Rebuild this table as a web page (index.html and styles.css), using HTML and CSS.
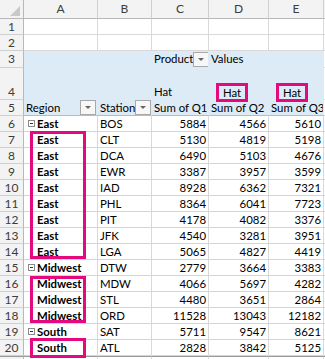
FILE: index.html
```html
<!DOCTYPE html>
<html>
<head>
<meta charset="UTF-8">
<title>Pivot table</title>
<link rel="stylesheet" href="styles.css">
</head>
<body>
<div class="wrap">
  <div class="sheet">
    <div class="corner"><svg width="10" height="10" viewBox="0 0 10 10"><polygon points="10,0 10,10 0,10" fill="#c9c9c9"/></svg></div>
    <div class="ch">A</div><div class="ch">B</div><div class="ch">C</div><div class="ch">D</div><div class="ch">E</div><div class="ch"></div>

    <div class="rh">1</div><div class="c"></div><div class="c"></div><div class="c"></div><div class="c"></div><div class="c"></div><div class="c"></div>
    <div class="rh">2</div><div class="c"></div><div class="c"></div><div class="c"></div><div class="c"></div><div class="c"></div><div class="c"></div>

    <div class="rh">3</div>
    <div class="c pv"></div><div class="c pv"></div>
    <div class="c pv"><span class="fld">Product</span><span class="dd"></span></div>
    <div class="c pv">Values</div><div class="c pv"></div><div class="c"></div>

    <div class="rh bot">4</div>
    <div class="c pv bot"></div><div class="c pv bot"></div>
    <div class="c pv bot">Hat</div>
    <div class="c pv bot open"><span class="mark">Hat</span></div>
    <div class="c pv bot open"><span class="mark">Hat</span></div>
    <div class="c"></div>

    <div class="rh">5</div>
    <div class="c pv last"><span class="fld">Region</span><span class="dd"></span></div>
    <div class="c pv last"><span class="fld">Station</span><span class="dd"></span></div>
    <div class="c pv last">Sum of Q1</div>
    <div class="c pv last">Sum of Q2</div>
    <div class="c pv last">Sum of Q3</div>
    <div class="c"></div>

    <div class="rh">6</div><div class="c r lbl"><span class="tog"></span>East</div><div class="c r">BOS</div><div class="c r num">5884</div><div class="c r num">4566</div><div class="c r num">5610</div><div class="c"></div>
    <div class="rh">7</div><div class="c r lbl ind">East</div><div class="c r">CLT</div><div class="c r num">5130</div><div class="c r num">4819</div><div class="c r num">5198</div><div class="c"></div>
    <div class="rh">8</div><div class="c r lbl ind">East</div><div class="c r">DCA</div><div class="c r num">6490</div><div class="c r num">5103</div><div class="c r num">4676</div><div class="c"></div>
    <div class="rh">9</div><div class="c r lbl ind">East</div><div class="c r">EWR</div><div class="c r num">3387</div><div class="c r num">3957</div><div class="c r num">3599</div><div class="c"></div>
    <div class="rh">10</div><div class="c r lbl ind">East</div><div class="c r">IAD</div><div class="c r num">8928</div><div class="c r num">6362</div><div class="c r num">7321</div><div class="c"></div>
    <div class="rh">11</div><div class="c r lbl ind">East</div><div class="c r">PHL</div><div class="c r num">8364</div><div class="c r num">6041</div><div class="c r num">7723</div><div class="c"></div>
    <div class="rh">12</div><div class="c r lbl ind">East</div><div class="c r">PIT</div><div class="c r num">4178</div><div class="c r num">4082</div><div class="c r num">3376</div><div class="c"></div>
    <div class="rh">13</div><div class="c r lbl ind">East</div><div class="c r">JFK</div><div class="c r num">4540</div><div class="c r num">3281</div><div class="c r num">3951</div><div class="c"></div>
    <div class="rh">14</div><div class="c r lbl ind">East</div><div class="c r">LGA</div><div class="c r num">5065</div><div class="c r num">4827</div><div class="c r num">4419</div><div class="c"></div>
    <div class="rh">15</div><div class="c r lbl"><span class="tog"></span>Midwest</div><div class="c r">DTW</div><div class="c r num">2779</div><div class="c r num">3664</div><div class="c r num">3383</div><div class="c"></div>
    <div class="rh">16</div><div class="c r lbl ind">Midwest</div><div class="c r">MDW</div><div class="c r num">4066</div><div class="c r num">5697</div><div class="c r num">4282</div><div class="c"></div>
    <div class="rh">17</div><div class="c r lbl ind">Midwest</div><div class="c r">STL</div><div class="c r num">4480</div><div class="c r num">3651</div><div class="c r num">2864</div><div class="c"></div>
    <div class="rh">18</div><div class="c r lbl ind">Midwest</div><div class="c r">ORD</div><div class="c r num">11528</div><div class="c r num">13043</div><div class="c r num">12182</div><div class="c"></div>
    <div class="rh">19</div><div class="c r lbl"><span class="tog"></span>South</div><div class="c r">SAT</div><div class="c r num">5711</div><div class="c r num">9547</div><div class="c r num">8621</div><div class="c"></div>
    <div class="rh">20</div><div class="c r lbl ind">South</div><div class="c r">ATL</div><div class="c r num">2828</div><div class="c r num">3842</div><div class="c r num">5125</div><div class="c"></div>
    <div class="rh edge"></div><div class="c edge"></div><div class="c edge"></div><div class="c edge"></div><div class="c edge"></div><div class="c edge"></div><div class="c edge"></div>
  </div>

  <!-- highlight boxes drawn over column A -->
  <div class="hl hl-east"></div>
  <div class="hl hl-midwest"></div>
  <div class="hl hl-south"></div>
</div>
</body>
</html>
```

FILE: styles.css
```css
body {
    margin: 0;
    padding: 0;
    background: #fff;
    overflow: hidden;
    font-family: Lato, "Liberation Sans", Arial, sans-serif;
    font-size: 11.4px;
    line-height: 14px;
    color: #000;
}

.wrap {
    position: relative;
    width: 325px;
    height: 359px;
    overflow: hidden;
}

.sheet {
    display: grid;
    grid-template-columns: 24px 74px 54px 57px 60px 55px 20px;
    grid-template-rows: 19px 16px 16px 17px 32px 16px repeat(15, 16px) 16px;
}

.sheet > div {
    box-sizing: border-box;
    border-right: 1px solid #d9d9d9;
    border-bottom: 1px solid #d9d9d9;
    display: flex;
    align-items: center;
    white-space: nowrap;
    overflow: hidden;
}

.corner {
    background: #f3f3f3;
    justify-content: flex-end;
    align-items: flex-end !important;
    padding: 0 3px 2px 0;
    border-right-color: #b8b8b8 !important;
    border-bottom-color: #b8b8b8 !important;
}

.ch {
    background: #f3f3f3;
    justify-content: center;
    color: #3c3c3c;
    font-size: 12px;
    border-right-color: #d0d0d0 !important;
    border-bottom-color: #b8b8b8 !important;
}

.rh {
    background: #f3f3f3;
    justify-content: center;
    color: #3c3c3c;
    font-size: 12px;
    border-right-color: #b8b8b8 !important;
    border-bottom-color: #d0d0d0 !important;
}

.c {
    padding: 0 2px;
}

/* pivot header area */
.pv {
    background: #ddebf7;
    border-right-color: #ddebf7 !important;
    border-bottom-color: #ddebf7 !important;
}

.pv.last {
    border-bottom-color: #9bc2e6 !important;
}

.bot {
    align-items: flex-end !important;
    padding-bottom: 0;
}

.sheet > .open {
    overflow: visible;
}

.fld {
    flex: 1;
}

.dd {
    position: relative;
    width: 14px;
    height: 13px;
    border: 1px solid #a9a9a9;
    background: #f7f7f7;
    flex: none;
    margin-right: -1px;
}

.dd::after {
    content: "";
    position: absolute;
    left: 4px;
    top: 5px;
    border-left: 3px solid transparent;
    border-right: 3px solid transparent;
    border-top: 3px solid #666;
}

.mark {
    position: relative;
    z-index: 1;
    display: inline-block;
    border: 3px solid #e4097f;
    padding: 0 4px;
    line-height: 13px;
    margin: 0 0 -3px 5px;
}

/* pivot body rows */
.r {
    border-bottom-color: #cbd6e3 !important;
}

.num {
    justify-content: flex-end;
}

.lbl {
    font-weight: bold;
}

.ind {
    padding-left: 13px;
}

.tog {
    position: relative;
    width: 7px;
    height: 7px;
    box-sizing: border-box;
    border: 1px solid #8c8c8c;
    margin: 0 2px 0 2px;
    flex: none;
}

.tog::after {
    content: "";
    position: absolute;
    left: 1px;
    top: 2px;
    width: 3px;
    height: 1px;
    background: #333;
}

.edge {
    border-top: 1px solid #9a9a9a;
}

.hl {
    position: absolute;
    left: 30px;
    width: 56px;
    box-sizing: border-box;
    border: 3px solid #e4097f;
}

.hl-east {
    top: 131px;
    height: 128px;
}

.hl-midwest {
    top: 276px;
    height: 47px;
}

.hl-south {
    top: 338px;
    height: 20px;
}
```
